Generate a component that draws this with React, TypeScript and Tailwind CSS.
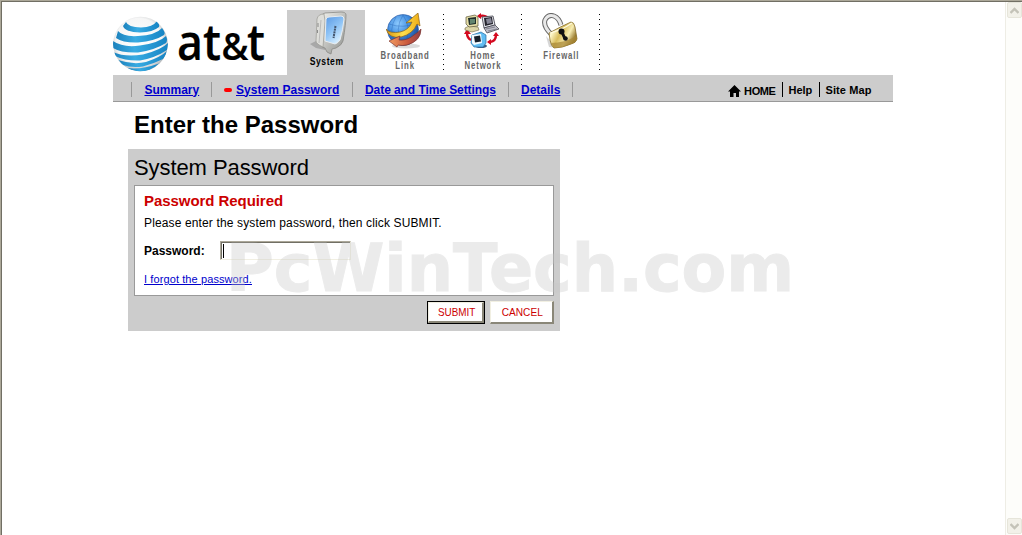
import React from 'react'

function SystemIcon() {
  return (
    <svg width="44" height="44" viewBox="0 0 44 44">
      <defs>
        <linearGradient id="sysShell" x1="0" y1="0" x2="1" y2="1">
          <stop offset="0" stopColor="#f4f4f0" />
          <stop offset="1" stopColor="#8d8f8c" />
        </linearGradient>
        <linearGradient id="sysFace" x1="0" y1="0" x2="0.6" y2="1">
          <stop offset="0" stopColor="#5797e4" />
          <stop offset="0.55" stopColor="#8fc4f6" />
          <stop offset="1" stopColor="#d8efff" />
        </linearGradient>
      </defs>
      <path d="M6 33l8-4 10 7-3 3-9-2z" fill="#999" opacity="0.7" />
      <path d="M17 5q1-2 4-3l16-1q5 0 5 3 0 8-3 26-1 4-7 7l-4 1-1 5q-5-1-6-6-5-1-5-5z" fill="url(#sysShell)" stroke="#8a8a86" strokeWidth="0.8" />
      <path d="M20 3q-6 0-7 5l-1 22q0 3 7 6l2-26z" fill="#dededa" stroke="#999994" strokeWidth="0.7" />
      <path d="M22 8q1-2 3-2l12-1q3 0 3 3-1 11-4 21-2 3-5 4l-10-3z" fill="url(#sysFace)" stroke="#e9edf0" strokeWidth="1" />
      <path d="M17 9l-2 23" stroke="#aaa" strokeWidth="0.7" fill="none" />
      <path d="M14 12v4M13.500 19v3" stroke="#777" strokeWidth="0.8" fill="none" />
      <path d="M31.500 15l-2 12" stroke="#42536b" strokeWidth="2" strokeDasharray="2 0.7" />
    </svg>
  )
}

function BroadbandIcon() {
  return (
    <svg width="36" height="36" viewBox="0 0 36 36">
      <defs>
        <radialGradient id="globe" cx="0.35" cy="0.3" r="0.75">
          <stop offset="0" stopColor="#8ecbff" />
          <stop offset="0.5" stopColor="#3f8bdd" />
          <stop offset="1" stopColor="#1b458f" />
        </radialGradient>
        <linearGradient id="arrowGold" x1="0" y1="0" x2="1" y2="0">
          <stop offset="0" stopColor="#d99513" />
          <stop offset="0.5" stopColor="#ffe04d" />
          <stop offset="1" stopColor="#edac16" />
        </linearGradient>
        <linearGradient id="arrowRed" x1="0" y1="0" x2="1" y2="0">
          <stop offset="0" stopColor="#f29b60" />
          <stop offset="0.6" stopColor="#c8573d" />
          <stop offset="1" stopColor="#8d3f49" />
        </linearGradient>
      </defs>
      <ellipse cx="20" cy="33" rx="14" ry="2.5" fill="#ccc" opacity="0.7" />
      <circle cx="17" cy="17" r="15.5" fill="url(#globe)" stroke="#2956a0" strokeWidth="0.6" />
      <g stroke="#1f5cae" strokeWidth="0.6" fill="none" opacity="0.6">
        <path d="M3 11q14 5 28-1M2 17q14 6 30 0M4 24q13 5 26 0" />
        <path d="M17 2q-9 14-1 30M17 2q10 14 1 30M10 4q-8 13-1 25M25 4q8 12 0 25" />
      </g>
      <path d="M0 16q4 5 14 3 9-2 12-10l-6 1 12-10 2 13-3-2q-4 10-16 13Q3 26 0 16z" fill="url(#arrowGold)" stroke="#8e6414" strokeWidth="0.7" />
      <path d="M35 16q0 12-14 16-5 1-9 0l-1 2-8-6 11-5-1 4q8 1 15-5 5-3 7-6z" fill="url(#arrowRed)" stroke="#7e3730" strokeWidth="0.7" />
    </svg>
  )
}

function NetworkIcon() {
  return (
    <svg width="36" height="36" viewBox="0 0 36 36">
      <g fill="none" stroke="#d4091f" strokeWidth="2.4">
        <path d="M23 4q-3-2-7-1" />
        <path d="M3 20q0 5 4 7" />
        <path d="M32 22q0 6-6 7" />
      </g>
      <path d="M17 0v6l-4-3zM0 21l3-5 4 5zM29 23l3-4 3 4zM27 26v6l-4-3z" fill="#d4091f" />
      {/* desktop monitor */}
      <path d="M1 15l4-2 9 1 1 3-7 2-7-2z" fill="#ddd6a7" stroke="#6d6747" strokeWidth="0.6" />
      <path d="M2 4l9-2 3 2v9l-9 1-3-3z" fill="#e5dea8" stroke="#5c5637" strokeWidth="0.7" />
      <path d="M4 5l8-1v7l-7 1z" fill="#1f2f2b" />
      <path d="M6 6h5v4l-5 1z" fill="#62856f" />
      {/* laptop */}
      <path d="M18 4l11-1 2 9-11 3z" fill="#e8e9ef" stroke="#383843" strokeWidth="0.8" />
      <path d="M20 5l8-1 1 7-8 2z" fill="#24242d" />
      <path d="M22 6l5-1 1 5-5 1z" fill="#878797" />
      <path d="M20 15l11-3 4 4-12 4z" fill="#bdbdc8" stroke="#33333c" strokeWidth="0.7" />
      <path d="M22 16l9-2M24 18l9-2" stroke="#6b6b77" strokeWidth="0.7" />
      {/* all-in-one */}
      <ellipse cx="17" cy="33" rx="6" ry="2" fill="#3d5e83" />
      <path d="M8 22l9-3 5 3v8l-3 4h-9l-3-4z" fill="#62bdf3" stroke="#266ba2" strokeWidth="0.7" />
      <path d="M8 22l9-1 1 9-8 2-2-2z" fill="#f4fbff" />
      <path d="M10 23.500l6-1 1 6-6 1z" fill="#17202b" />
    </svg>
  )
}

function FirewallIcon() {
  return (
    <svg width="36" height="36" viewBox="0 0 36 36">
      <defs>
        <linearGradient id="lockGold" x1="0" y1="0" x2="1" y2="0.5">
          <stop offset="0" stopColor="#b4933b" />
          <stop offset="0.25" stopColor="#fff8cc" />
          <stop offset="0.5" stopColor="#d8bd5c" />
          <stop offset="0.75" stopColor="#f8edb2" />
          <stop offset="1" stopColor="#8d6d20" />
        </linearGradient>
      </defs>
      <path d="M9 21Q1 13 3 7q3-6 9-4 5 2 7 9" fill="none" stroke="#666" strokeWidth="5" />
      <path d="M9 21Q1 13 3 7q3-6 9-4 5 2 7 9" fill="none" stroke="#e8e8e8" strokeWidth="3" />
      <path d="M4 23l3 11 8 1z" fill="#bbb" opacity="0.6" />
      <path d="M7 20q11-6 22-11 3 0 4 5l2 12q-1 4-6 5-9 4-17 4-3-2-4-8z" fill="url(#lockGold)" stroke="#846b28" strokeWidth="0.8" />
      <path d="M9 30q14 0 25-7l1 3q-1 4-6 5-9 4-17 4z" fill="#a98a38" opacity="0.75" />
      <path d="M8 20q12-3 22-10" stroke="#fffbe0" strokeWidth="1.2" fill="none" />
      <circle cx="19.500" cy="18.500" r="3" fill="#111" />
      <path d="M20 19l3 7" stroke="#111" strokeWidth="3" />
      <circle cx="23.500" cy="25.500" r="2.300" fill="#111" />
    </svg>
  )
}

function Logo() {
  return (
    <svg className="overflow-visible" width="156" height="58" viewBox="0 0 156 58">
      <defs>
        <radialGradient id="ball" cx="0.47" cy="0.45" r="0.56">
          <stop offset="0" stopColor="#fff" />
          <stop offset="0.75" stopColor="#f6f6f6" />
          <stop offset="1" stopColor="#b0b4b7" />
        </radialGradient>
        <linearGradient id="stripe" x1="0" y1="0" x2="1" y2="0">
          <stop offset="0" stopColor="#1c82bd" />
          <stop offset="0.4" stopColor="#39abe2" />
          <stop offset="1" stopColor="#1684c4" />
        </linearGradient>
        <clipPath id="ballClip">
          <circle cx="27.500" cy="29" r="27.500" />
        </clipPath>
      </defs>
      <circle cx="27.500" cy="29" r="27.300" fill="url(#ball)" />
      <g clipPath="url(#ballClip)" fill="url(#stripe)">
        <path d="M13 7Q15 12 28 12.500 40 12 44 6 47 10 46 12 40 17 27 17.500 12 17 10 11z" />
        <path d="M5 16Q10 22 25 21 43 20 49 13 53 18 51 20 42 26 25 27.500 10 28 3 23z" />
        <path d="M0 26Q10 33 27 30.500 46 28 53 21q2 4 0 7Q42 35 25 37.500 8 38 0 33z" />
        <path d="M0 37Q12 42.500 30 39.500 48 35 55 28q0 5-1 7Q42 43 27 45.500 12 46 2 41z" />
        <path d="M5 45Q20 50 33 47 48 42 54 36q-2 6-4 8Q40 49 30 51.500 18 53 10 50z" />
        <path d="M14 53Q28 55 46 48.500 38 56.500 26 56.500 19 56 14 53z" />
      </g>
      <g
        fontFamily="'Open Sans', 'Noto Sans', sans-serif"
        fontWeight="600"
        fill="#000"
        stroke="#000"
        strokeWidth="0.2"
        strokeLinejoin="round"
      >
        <text x="64" y="45" fontSize="50" textLength="26" lengthAdjust="spacingAndGlyphs">a</text>
        <text x="90" y="45" fontSize="50" textLength="18" lengthAdjust="spacingAndGlyphs">t</text>
        <text x="108.500" y="45" fontSize="38" textLength="27" lengthAdjust="spacingAndGlyphs">&amp;</text>
        <text x="134" y="45" fontSize="50" textLength="18" lengthAdjust="spacingAndGlyphs">t</text>
      </g>
    </svg>
  )
}

const tabs = [
  { id: 'broadband', lines: ['Broadband', 'Link'], icon: <BroadbandIcon /> },
  { id: 'network', lines: ['Home', 'Network'], icon: <NetworkIcon /> },
  { id: 'firewall', lines: ['Firewall'], icon: <FirewallIcon /> },
]

const links = [
  { label: 'Summary', item: 'w-[80px] pl-[12.500px]', text: '' },
  { label: 'System Password', item: 'w-[141px] pl-[12px]', text: 'tracking-[0.050px]', active: true },
  { label: 'Date and Time Settings', item: 'w-[156px] pl-[12px]', text: 'tracking-[-0.070px]' },
  { label: 'Details', item: 'w-[64px] pl-[12px]', text: '' },
]

function ScrollButton({ d }: { d: string }) {
  return (
    <div className="flex h-[16px] w-[15px] items-center justify-center rounded-[2px] border border-[#e6e5da] bg-[#f2f1e9]">
      <svg width="9" height="7" viewBox="0 0 9 7">
        <path d={d} fill="none" stroke="#c4c3b8" strokeWidth="2.4" />
      </svg>
    </div>
  )
}

export default function App() {
  return (
    <div
      className="relative flex h-[535px] w-[1022px] overflow-hidden border-l border-t border-[#aca899] bg-white text-black"
      style={{ fontFamily: "'Liberation Sans', Arial, sans-serif" }}
    >
      <div className="flex min-w-0 flex-1 border-l border-t border-[#716f64]">
        <main className="flex-1 pl-[111px] pt-[8px]">
          <header className="flex h-[65px] w-[780px]">
            <div className="w-[174px] pt-[5px]">
              <Logo />
            </div>
            <div className="flex w-[78px] flex-col items-center bg-[#ccc]">
              <div className="h-[45px] pt-px">
                <SystemIcon />
              </div>
              <span className="ml-px scale-x-[0.78] text-[11px] font-bold leading-[13px] tracking-[0.7px]">System</span>
            </div>
            {tabs.map((t) => (
              <div key={t.id} className="flex w-[78px]">
                <div className="flex w-[78px] shrink-0 flex-col items-center pt-[3px]">
                  <div className="h-[37px]">{t.icon}</div>
                  <div className="ml-[2px] scale-x-[0.74] text-center text-[10.500px] font-bold leading-[10px] tracking-[1.200px] text-[#666]">
                    {t.lines.map((l) => (
                      <div key={l}>{l}</div>
                    ))}
                  </div>
                </div>
                <div className="-mr-px mt-[4px] h-[56px] w-px shrink-0 bg-[repeating-linear-gradient(to_bottom,#000_0px,#000_1px,transparent_1px,transparent_5px)]" />
              </div>
            ))}
          </header>

          <nav className="flex h-[27px] w-[780px] justify-between border-b border-[#999] bg-[#ccc] pl-[18px] pr-[21px]">
            <div className="flex pt-[7px]">
              {links.map((l) => (
                <div key={l.label} className={`flex h-[15px] shrink-0 items-center border-l border-[#999] ${l.item}`}>
                  {l.active && <span className="mr-[4px] h-[4px] w-[8px] shrink-0 rounded-full bg-[#f00]" />}
                  <a
                    href="#"
                    className={`whitespace-nowrap pt-px text-[12px] font-bold leading-[15px] text-[#0000cc] underline ${l.text}`}
                  >
                    {l.label}
                  </a>
                </div>
              ))}
              <div className="h-[15px] w-px bg-[#999]" />
            </div>
            <div className="flex pt-[7px] text-[11px] font-bold leading-[16px]">
              <a href="#" className="flex h-[15px] pr-[6px] leading-[18px] tracking-[-0.400px]">
                <svg className="mr-[3px] mt-[3px]" width="13" height="12" viewBox="0 0 13 12">
                  <path d="M6.500 0L13 6.500h-2V12H8V8H5.500v4H2V6.500H0z" fill="#000" />
                </svg>
                HOME
              </a>
              <a href="#" className="h-[15px] w-[37px] border-l border-black pl-[6px]">
                Help
              </a>
              <a href="#" className="h-[15px] w-[53.500px] whitespace-nowrap border-l border-black pl-[6px] tracking-[0.100px]">
                Site Map
              </a>
            </div>
          </nav>

          <h1 className="ml-[21px] mt-[8px] text-[24px] font-bold leading-[30px]">Enter the Password</h1>

          <form className="ml-[15px] mt-[9px] h-[182px] w-[432px] bg-[#ccc] px-[6px] pt-[5px]">
            <h2 className="h-[31px] text-[22px] leading-[28px] tracking-[-0.080px]">System Password</h2>
            <div className="h-[111px] border border-[#999] bg-white pl-[9px] pt-[6px]">
              <h3 className="text-[15px] font-bold leading-[18px] tracking-[-0.060px] text-[#c00]">Password Required</h3>
              <p className="mt-[5px] text-[12px] leading-[16px] tracking-[0.135px]">
                Please enter the system password, then click SUBMIT.
              </p>
              <div className="mt-[10px] flex h-[20px]">
                <label className="w-[76px] text-[12px] font-bold leading-[20px]">Password:</label>
                <div className="h-[19px] w-[131px] border border-b-[#f1efe2] border-l-[#aca899] border-r-[#f1efe2] border-t-[#aca899] bg-white">
                  <div className="h-[17px] border-l border-t border-[#716f64] pl-px pt-px">
                    <div className="h-[14px] w-px bg-black" />
                  </div>
                </div>
              </div>
              <a
                href="#"
                className="mt-[11px] block text-[11px] leading-[14px] tracking-[0.100px] text-[#0000cc] underline"
              >
                I forgot the password.
              </a>
            </div>
            <div className="mt-[5px] flex justify-end gap-[5px] text-[11px] leading-[18px] text-[#c00]">
              <button type="button" className="h-[23px] w-[58px] border border-black bg-white">
                <span className="block h-[21px] border border-b-2 border-r-2 border-[#f1efe2] border-b-[#8a8778] border-r-[#8a8778] leading-[19px]">
                  <span className="inline-block scale-x-[0.9] pl-[2px]">SUBMIT</span>
                </span>
              </button>
              <button
                type="button"
                className="h-[23px] w-[64px] border border-b-2 border-r-2 border-[#f1efe2] border-b-[#8a8778] border-r-[#8a8778] bg-white leading-[20px]"
              >
                <span className="inline-block scale-x-[0.92] pl-[2px]">CANCEL</span>
              </button>
            </div>
          </form>
        </main>

        <aside className="flex w-[17px] flex-col items-center justify-between border-l border-[#eeede5] bg-[#fdfdfa] pb-px">
          <ScrollButton d="M0.500 6L4.500 2l4 4" />
          <ScrollButton d="M0.500 1l4 4 4-4" />
        </aside>
      </div>

      {/* watermark */}
      <div
        className="pointer-events-none absolute left-[225px] top-[229px] whitespace-nowrap text-[65.200px] font-bold leading-[76px] text-[#c8c8c8] opacity-[0.35] [-webkit-text-stroke:1px_#c8c8c8]"
        style={{ fontFamily: "'DejaVu Sans', Verdana, sans-serif" }}
      >
        PcWinTech.com
      </div>
    </div>
  )
}
